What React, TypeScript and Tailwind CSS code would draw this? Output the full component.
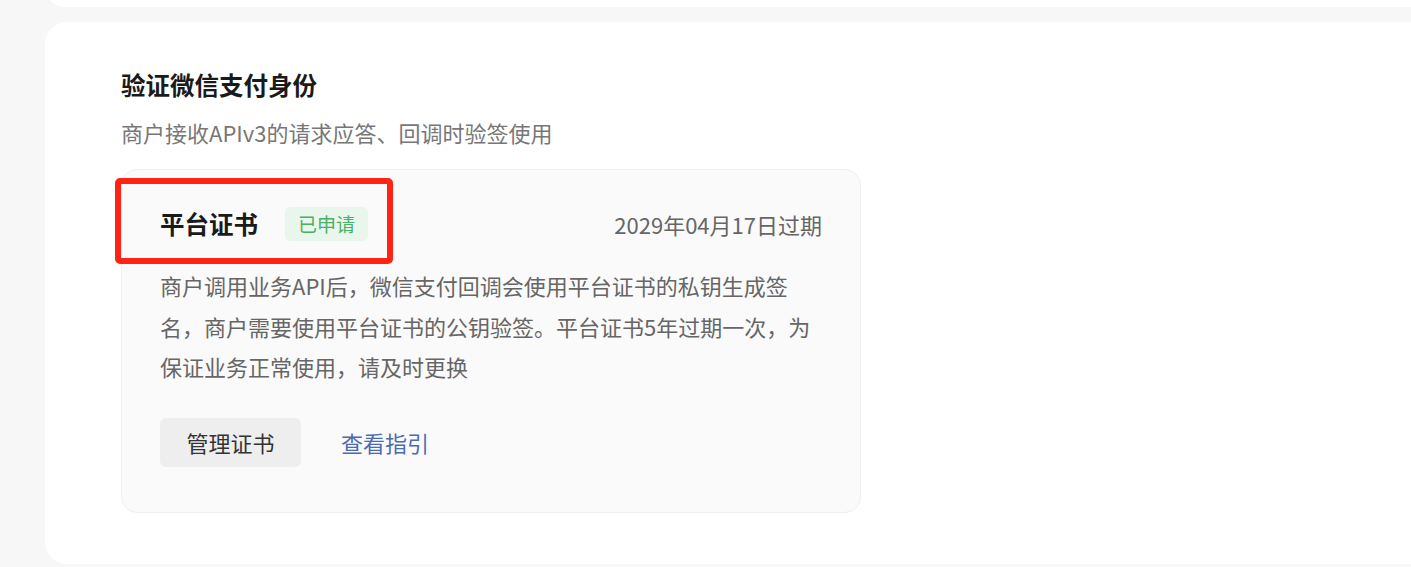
import React from "react";

const font = { fontFamily: '"Noto Sans CJK SC", "Noto Sans", sans-serif' };

const CertCard = () => {
  return (
    <div className="relative mt-[21px] w-[740px] h-[344px] rounded-[16px] border border-[#efefef] bg-[#fafafa] pl-[38px] pr-[38px] pt-[37px]">
      {/* Header */}
      <div className="flex items-center justify-between h-[34px]">
        <div className="flex items-center">
          <span className="text-[24.5px] leading-[34px] font-semibold text-[#1a1a1a]">平台证书</span>
          <span className="ml-[27px] h-[34px] px-[13px] rounded-[5px] bg-[#e9f6ec] text-[19px] leading-[34px] text-[#4caf65]">
            已申请
          </span>
        </div>
        <span className="text-[22px] leading-[34px] text-[#666666]">2029年04月17日过期</span>
      </div>

      {/* Description */}
      <p className="mt-[24px] text-[22px] leading-[40.5px] text-[#666666] whitespace-nowrap">
        商户调用业务API后，微信支付回调会使用平台证书的私钥生成签
        <br />
        名，商户需要使用平台证书的公钥验签。平台证书5年过期一次，为
        <br />
        保证业务正常使用，请及时更换
      </p>

      {/* Actions */}
      <div className="mt-[31px] flex items-center">
        <button className="h-[49px] w-[141px] rounded-[6px] bg-[#eeeeee] text-[22px] text-[#333333]">
          管理证书
        </button>
        <a className="ml-[40px] text-[22px] text-[#4d6bb0] cursor-pointer">查看指引</a>
      </div>

      {/* Annotation box */}
      <div className="absolute left-[-7px] top-[8px] w-[278px] h-[86px] rounded-[5px] border-[6px] border-[#ff2414]" />
    </div>
  );
};

const App = () => {
  return (
    <div className="w-[1411px] h-[567px] overflow-hidden bg-[#f7f7f7]" style={font}>
      {/* Previous card, cut off at top */}
      <div className="ml-[45px] -mt-[33px] h-[40px] w-[1400px] rounded-[20px] bg-white" />

      {/* Verification card */}
      <div className="ml-[45px] mt-[15px] h-[542px] w-[1400px] rounded-[22px] bg-white pl-[76px] pt-[46px]">
        <h2 className="text-[24.5px] leading-[34px] font-semibold text-[#1a1a1a]">验证微信支付身份</h2>
        <p className="mt-[14px] text-[22px] leading-[32px] text-[#777777]">商户接收APIv3的请求应答、回调时验签使用</p>
        <CertCard />
      </div>
    </div>
  );
};

export default App;
